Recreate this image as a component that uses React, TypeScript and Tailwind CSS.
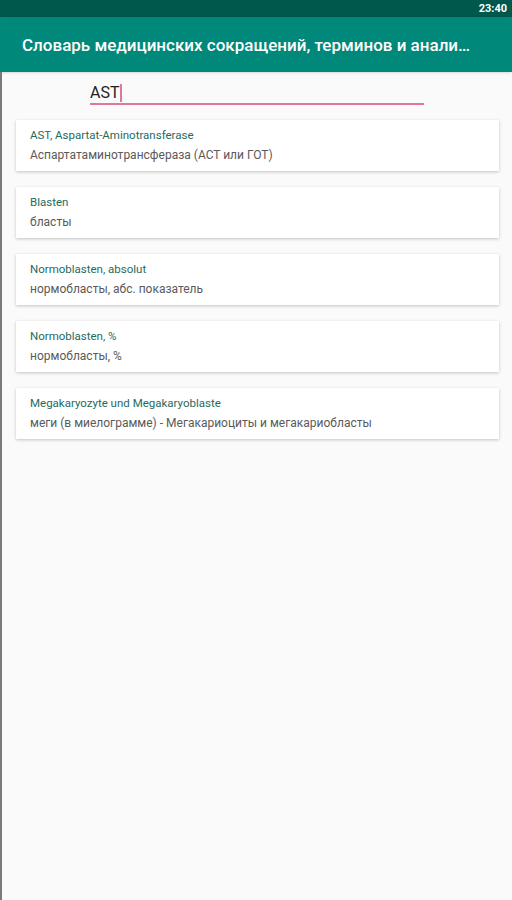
const items = [
  { term: "AST, Aspartat-Aminotransferase", desc: "Аспартатаминотрансфераза (АСТ или ГОТ)" },
  { term: "Blasten", desc: "бласты" },
  { term: "Normoblasten, absolut", desc: "нормобласты, абс. показатель" },
  { term: "Normoblasten, %", desc: "нормобласты, %" },
  { term: "Megakaryozyte und Megakaryoblaste", desc: "меги (в миелограмме) - Мегакариоциты и мегакариобласты" },
];

export default function App() {
  return (
    <div className="flex h-[900px] w-[512px] flex-col overflow-hidden bg-[#fafafa] font-['Roboto',sans-serif]">
      {/* Status bar */}
      <div className="flex h-[17px] shrink-0 items-center justify-end bg-[#00574c] pr-[5px]">
        <span className="text-[11px] font-bold leading-none text-white">23:40</span>
      </div>

      {/* App bar */}
      <div className="flex h-[55px] shrink-0 items-center bg-[#00887a] pl-[22px] pr-[38px] pt-[3px] shadow-sm">
        <h1 className="truncate text-[17px] font-medium text-white">
          Словарь медицинских сокращений, терминов и анализов
        </h1>
      </div>

      {/* Content */}
      <div className="flex flex-1 flex-col border-l-2 border-[#7a7a7a]">
        <div className="ml-[88px] mt-[6px] flex h-[27px] w-[334px] items-center border-b-2 border-[#e27899] pt-[5px]">
          <span className="text-[16px] leading-none text-[#222]">AST</span>
          <span className="ml-[1px] h-[18px] w-[2px] bg-[#e27899]" />
        </div>

        <div className="ml-[14px] mr-[13px] mt-[15px] flex flex-col gap-[16px]">
          {items.map((it) => (
            <div
              key={it.term}
              className="flex h-[51px] flex-col justify-center gap-[7px] bg-white pl-[14px] shadow-[0_1px_3px_rgba(0,0,0,0.22)]"
            >
              <p className="text-[11.5px] leading-[13px] text-[#1f6b5e]">{it.term}</p>
              <p className="text-[12px] leading-[13px] text-[#5a5a5a]">{it.desc}</p>
            </div>
          ))}
        </div>
      </div>
    </div>
  );
}
